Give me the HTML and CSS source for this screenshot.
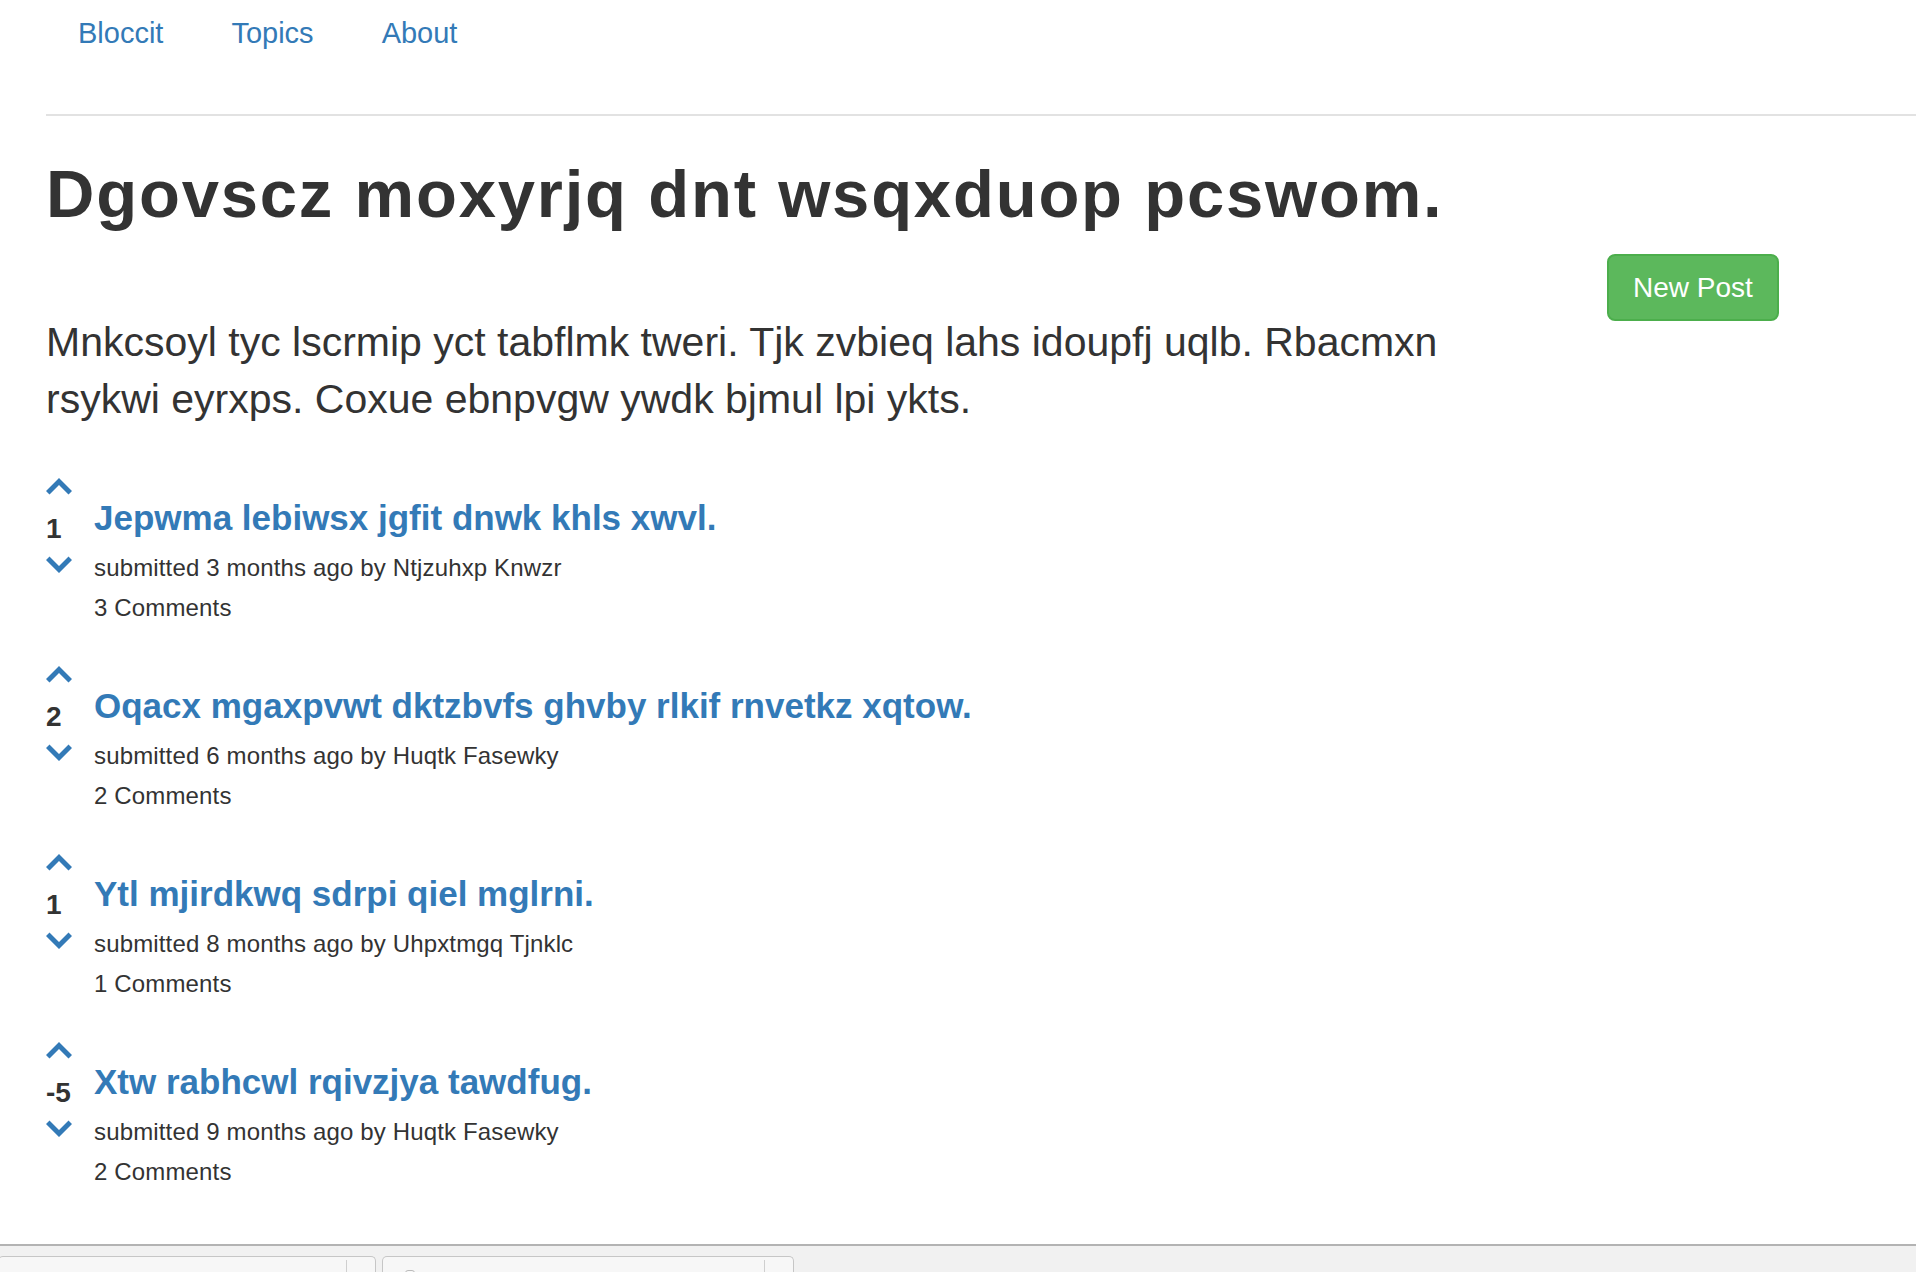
FILE: index.html
```html
<!DOCTYPE html>
<html lang="en">
<head>
<meta charset="utf-8">
<title>Bloccit</title>
<link rel="stylesheet" href="styles.css">
</head>
<body>
<div class="page">
  <div class="container">
    <nav class="nav">
      <a class="nav-link" href="#">Bloccit</a>
      <a class="nav-link" href="#">Topics</a>
      <a class="nav-link" href="#">About</a>
    </nav>
    <hr class="rule">
    <div class="header-row">
      <div class="main-col">
        <h1 class="title">Dgovscz moxyrjq dnt wsqxduop pcswom.</h1>
        <p class="lead">Mnkcsoyl tyc lscrmip yct tabflmk tweri. Tjk zvbieq lahs idoupfj uqlb. Rbacmxn rsykwi eyrxps. Coxue ebnpvgw ywdk bjmul lpi ykts.</p>
      </div>
      <div class="side-col">
        <a class="btn-new" href="#">New Post</a>
      </div>
    </div>

    <div class="posts">
      <div class="post">
        <div class="vote">
          <svg class="chev" viewBox="0 0 26 17"><polygon points="13,0 26,13 22.5,16.5 13,7 3.5,16.5 0,13"/></svg>
          <div class="score">1</div>
          <svg class="chev" viewBox="0 0 26 17"><polygon points="13,17 26,4 22.5,0.5 13,10 3.5,0.5 0,4"/></svg>
        </div>
        <div class="post-body">
          <a class="post-title" href="#">Jepwma lebiwsx jgfit dnwk khls xwvl.</a>
          <div class="meta">submitted 3 months ago by Ntjzuhxp Knwzr</div>
          <div class="meta">3 Comments</div>
        </div>
      </div>

      <div class="post">
        <div class="vote">
          <svg class="chev" viewBox="0 0 26 17"><polygon points="13,0 26,13 22.5,16.5 13,7 3.5,16.5 0,13"/></svg>
          <div class="score">2</div>
          <svg class="chev" viewBox="0 0 26 17"><polygon points="13,17 26,4 22.5,0.5 13,10 3.5,0.5 0,4"/></svg>
        </div>
        <div class="post-body">
          <a class="post-title" href="#">Oqacx mgaxpvwt dktzbvfs ghvby rlkif rnvetkz xqtow.</a>
          <div class="meta">submitted 6 months ago by Huqtk Fasewky</div>
          <div class="meta">2 Comments</div>
        </div>
      </div>

      <div class="post">
        <div class="vote">
          <svg class="chev" viewBox="0 0 26 17"><polygon points="13,0 26,13 22.5,16.5 13,7 3.5,16.5 0,13"/></svg>
          <div class="score">1</div>
          <svg class="chev" viewBox="0 0 26 17"><polygon points="13,17 26,4 22.5,0.5 13,10 3.5,0.5 0,4"/></svg>
        </div>
        <div class="post-body">
          <a class="post-title" href="#">Ytl mjirdkwq sdrpi qiel mglrni.</a>
          <div class="meta">submitted 8 months ago by Uhpxtmgq Tjnklc</div>
          <div class="meta">1 Comments</div>
        </div>
      </div>

      <div class="post">
        <div class="vote">
          <svg class="chev" viewBox="0 0 26 17"><polygon points="13,0 26,13 22.5,16.5 13,7 3.5,16.5 0,13"/></svg>
          <div class="score">-5</div>
          <svg class="chev" viewBox="0 0 26 17"><polygon points="13,17 26,4 22.5,0.5 13,10 3.5,0.5 0,4"/></svg>
        </div>
        <div class="post-body">
          <a class="post-title" href="#">Xtw rabhcwl rqivzjya tawdfug.</a>
          <div class="meta">submitted 9 months ago by Huqtk Fasewky</div>
          <div class="meta">2 Comments</div>
        </div>
      </div>
    </div>
  </div>

  <div class="shelf">
    <div class="tab tab-first"><span class="tab-sep"></span></div>
    <div class="tab tab-second"><span class="tab-dot"></span><span class="tab-sep"></span></div>
  </div>
</div>
</body>
</html>
```

FILE: styles.css
```css
* { box-sizing: border-box; }

html, body {
  margin: 0;
  padding: 0;
  background: #fff;
}

body {
  font-family: "Liberation Sans", Arial, Helvetica, sans-serif;
  color: #333;
  overflow: hidden;
}

.page {
  min-height: 100vh;
  display: flex;
  flex-direction: column;
}

.container {
  padding-left: 46px;
}

.nav {
  display: flex;
  gap: 68px;
  padding: 13px 0 0 32px;
  height: 114px;
}

.nav-link {
  font-size: 29px;
  line-height: 40px;
  color: #337ab7;
  text-decoration: none;
}

.rule {
  margin: 0;
  border: 0;
  border-top: 2px solid #e2e2e2;
}

.header-row {
  display: flex;
}

.main-col {
  width: 1400px;
  flex: none;
}

.side-col {
  flex: 1;
  padding-left: 161px;
}

.title {
  margin: 43px 0 0;
  font-size: 67px;
  line-height: 69px;
  font-weight: bold;
  color: #333;
  letter-spacing: 1.8px;
  white-space: nowrap;
}

.lead {
  margin: 86px 0 0;
  font-size: 41px;
  line-height: 57px;
  font-weight: 300;
  color: #333;
}

.btn-new {
  display: inline-flex;
  align-items: center;
  justify-content: center;
  margin-top: 138px;
  width: 172px;
  height: 67px;
  background: #5cb85c;
  border: 2px solid #4cae4c;
  border-radius: 8px;
  color: #fff;
  font-size: 28px;
  text-decoration: none;
}

.posts {
  padding-top: 50px;
}

.post {
  display: flex;
  height: 188px;
}

.vote {
  width: 48px;
  flex: none;
  display: flex;
  flex-direction: column;
  align-items: flex-start;
}

.chev {
  width: 26px;
  height: 17px;
  fill: #337ab7;
  display: block;
}

.score {
  margin: 18px 0 11px 0;
  font-size: 28px;
  line-height: 32px;
  font-weight: bold;
  color: #333;
}

.post-body {
  padding-top: 20px;
  display: flex;
  flex-direction: column;
  align-items: flex-start;
}

.post-title {
  font-size: 35px;
  line-height: 39px;
  font-weight: bold;
  color: #337ab7;
  text-decoration: none;
}

.meta {
  font-size: 24px;
  line-height: 33px;
  letter-spacing: 0.15px;
  color: #333;
}

.post-title + .meta {
  margin-top: 14px;
}

.meta + .meta {
  margin-top: 7px;
}

.shelf {
  margin-top: auto;
  height: 28px;
  background: #f1f1f1;
  border-top: 2px solid #b3b3b3;
  display: flex;
  align-items: flex-end;
  gap: 6px;
}

.tab {
  position: relative;
  height: 16px;
  background: #f7f7f7;
  border: 1px solid #c6c6c6;
  border-bottom: 0;
  border-radius: 5px 5px 0 0;
}

.tab-first {
  width: 378px;
  margin-left: -2px;
}

.tab-second {
  width: 412px;
}

.tab-sep {
  position: absolute;
  top: 3px;
  bottom: 0;
  right: 28px;
  width: 1px;
  background: #cfcfcf;
}

.tab-dot {
  position: absolute;
  left: 22px;
  top: 13px;
  width: 10px;
  height: 10px;
  border: 1px solid #bbb;
  border-radius: 3px;
}
```
